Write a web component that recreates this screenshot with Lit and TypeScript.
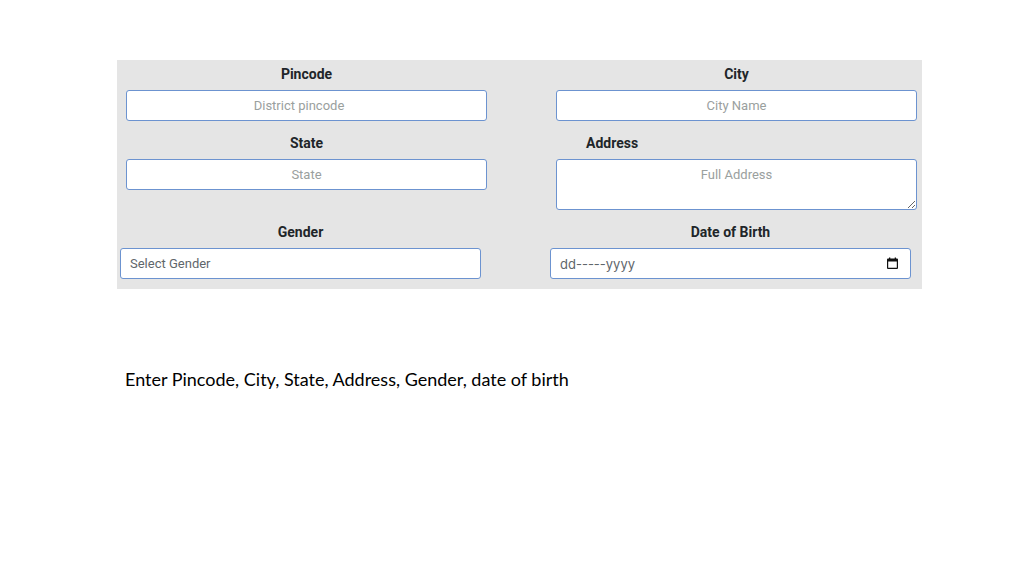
import { LitElement, html, css } from "lit";
import { customElement } from "lit/decorators.js";

@customElement("app-root")
export class AppRoot extends LitElement {
  static styles = css`
    :host {
      display: block;
      min-height: 100vh;
      box-sizing: border-box;
      padding: 60px 102px 0 117px;
      background: #fff;
      font-family: Roboto, "Liberation Sans", sans-serif;
    }
    .panel {
      display: grid;
      gap: 8px;
      padding-bottom: 10px;
      background: #e5e5e5;
    }
    .row {
      display: grid;
      grid-template-columns: 1fr 1fr;
      column-gap: 69px;
      align-items: start;
      padding: 0 5px 0 9px;
    }
    .row.wide {
      padding: 0 11px 0 3px;
    }
    .field {
      display: grid;
      row-gap: 2px;
    }
    label {
      font-size: 14px;
      line-height: 28px;
      font-weight: 700;
      text-align: center;
      color: #212529;
    }
    .indented {
      text-align: left;
      padding-left: 30px;
    }
    .control {
      box-sizing: border-box;
      width: 100%;
      height: 31px;
      margin: 0;
      padding: 0 10px;
      border: 1px solid #6c93d0;
      border-radius: 3px;
      background: #fff;
      color: #5f666b;
      font-family: inherit;
      font-size: 13px;
      line-height: 18px;
      text-align: center;
      appearance: none;
    }
    .control::placeholder {
      color: #9aa09e;
      opacity: 1;
    }
    textarea.control {
      display: block;
      height: 51px;
      padding: 6px 10px;
      resize: vertical;
      overflow: auto;
    }
    .control.start {
      padding: 0 9px;
      text-align: left;
    }
    .start::placeholder {
      color: #5f666b;
    }
    select.start {
      font-size: 13px;
    }
    .date {
      display: grid;
      align-items: center;
    }
    .date > * {
      grid-area: 1 / 1;
    }
    .date .control {
      font-family: Inter, sans-serif;
    }
    .picker {
      justify-self: end;
      display: flex;
      margin: 0 12px 0 0;
      padding: 0;
      border: 0;
      background: none;
      color: #111;
    }
    .caption {
      margin: 78px 0 0 8px;
      font-family: Lato, "Noto Sans", sans-serif;
      font-size: 18px;
      line-height: 24px;
      color: #000;
    }
  `;

  render() {
    return html`
      <form class="panel">
        <div class="row">
          <div class="field">
            <label for="pincode">Pincode</label>
            <input class="control" id="pincode" type="number" placeholder="District pincode" />
          </div>
          <div class="field">
            <label for="city">City</label>
            <input class="control" id="city" type="text" placeholder="City Name" />
          </div>
        </div>
        <div class="row">
          <div class="field">
            <label for="state">State</label>
            <input class="control" id="state" type="text" placeholder="State" />
          </div>
          <div class="field">
            <label class="indented" for="address">Address</label>
            <textarea class="control" id="address" placeholder="Full Address"></textarea>
          </div>
        </div>
        <div class="row wide">
          <div class="field">
            <label for="gender">Gender</label>
            <select class="control start" id="gender">
              <option>Select Gender</option>
            </select>
          </div>
          <div class="field">
            <label for="dob">Date of Birth</label>
            <div class="date">
              <input class="control start" id="dob" type="text" placeholder="dd-----yyyy" />
              <button class="picker" type="button" aria-label="Open calendar">
                <svg width="13" height="13" viewBox="0 0 13 13" aria-hidden="true">
                  <path
                    fill="currentColor"
                    fill-rule="evenodd"
                    d="M3 0.5h1.3V1.5h4.4V0.5H10V1.5h1a1 1 0 0 1 1 1v8.500a1 1 0 0 1-1 1H2a1 1 0 0 1-1-1V2.500a1 1 0 0 1 1-1h1zM2.200 4.600v6.200h8.600V4.600z"
                  />
                </svg>
              </button>
            </div>
          </div>
        </div>
      </form>
      <p class="caption">Enter Pincode, City, State, Address, Gender, date of birth</p>
    `;
  }
}
